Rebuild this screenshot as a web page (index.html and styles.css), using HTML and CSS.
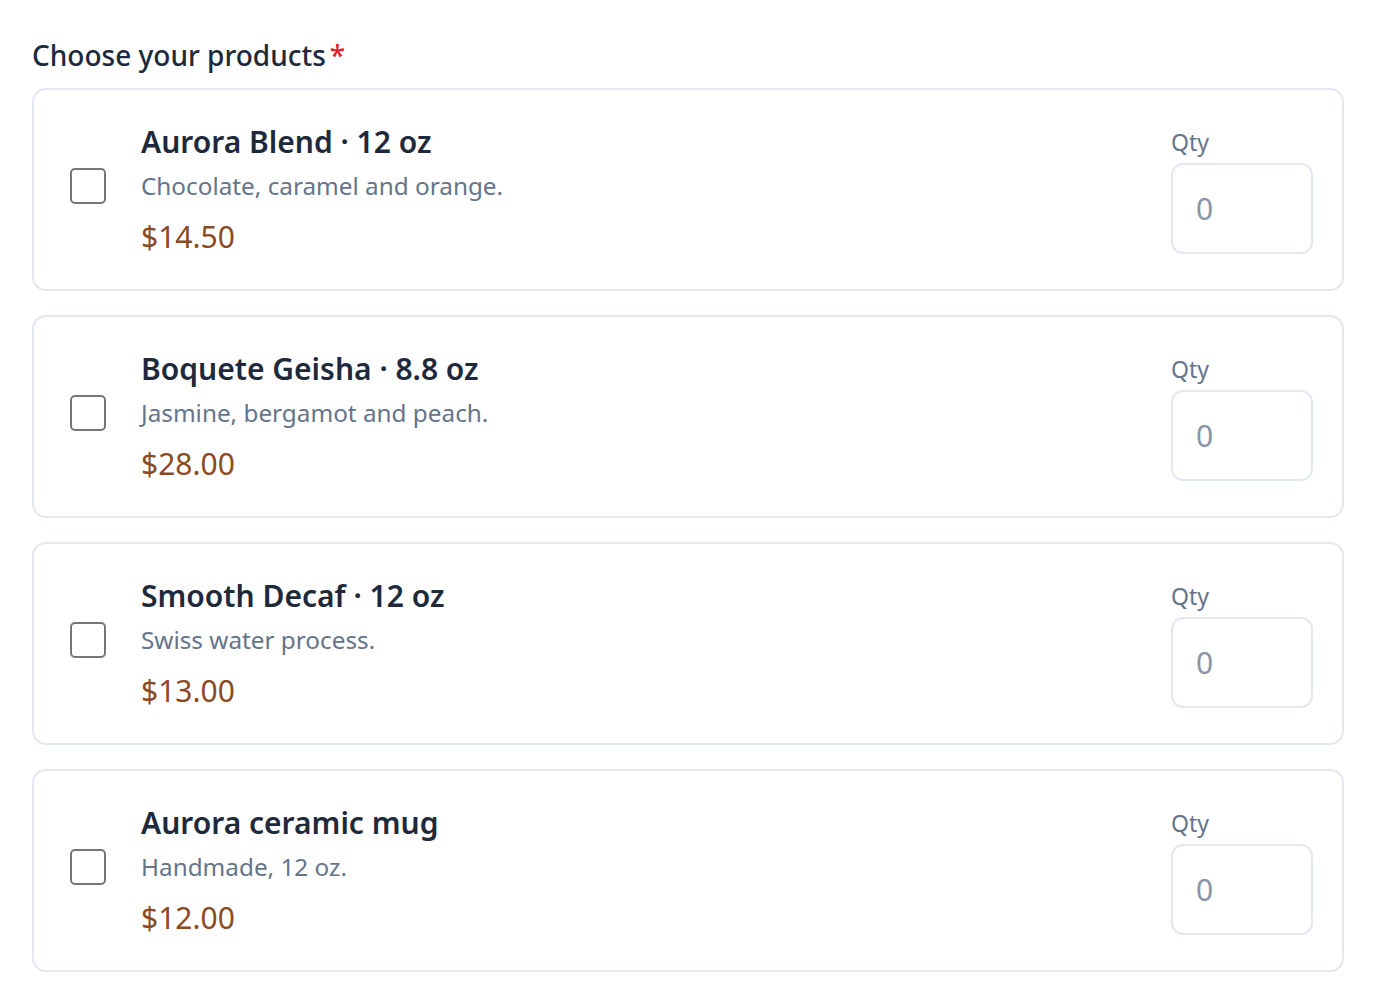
FILE: index.html
```html
<!DOCTYPE html>
<html lang="en">
<head>
    <meta charset="UTF-8">
    <meta name="viewport" content="width=device-width, initial-scale=1.0">
    <title>Choose your products</title>
    <link rel="stylesheet" href="styles.css">
</head>
<body>
    <div class="field">
        <div class="field-label">Choose your products<span class="required">*</span></div>

        <div class="product-list">
            <label class="product-card">
                <input type="checkbox" class="product-check">
                <div class="product-info">
                    <div class="product-name">Aurora Blend · 12 oz</div>
                    <div class="product-desc">Chocolate, caramel and orange.</div>
                    <div class="product-price">$14.50</div>
                </div>
                <div class="qty">
                    <span class="qty-label">Qty</span>
                    <input type="text" class="qty-input" placeholder="0">
                </div>
            </label>

            <label class="product-card">
                <input type="checkbox" class="product-check">
                <div class="product-info">
                    <div class="product-name">Boquete Geisha · 8.8 oz</div>
                    <div class="product-desc">Jasmine, bergamot and peach.</div>
                    <div class="product-price">$28.00</div>
                </div>
                <div class="qty">
                    <span class="qty-label">Qty</span>
                    <input type="text" class="qty-input" placeholder="0">
                </div>
            </label>

            <label class="product-card">
                <input type="checkbox" class="product-check">
                <div class="product-info">
                    <div class="product-name">Smooth Decaf · 12 oz</div>
                    <div class="product-desc">Swiss water process.</div>
                    <div class="product-price">$13.00</div>
                </div>
                <div class="qty">
                    <span class="qty-label">Qty</span>
                    <input type="text" class="qty-input" placeholder="0">
                </div>
            </label>

            <label class="product-card">
                <input type="checkbox" class="product-check">
                <div class="product-info">
                    <div class="product-name">Aurora ceramic mug</div>
                    <div class="product-desc">Handmade, 12 oz.</div>
                    <div class="product-price">$12.00</div>
                </div>
                <div class="qty">
                    <span class="qty-label">Qty</span>
                    <input type="text" class="qty-input" placeholder="0">
                </div>
            </label>
        </div>
    </div>
</body>
</html>
```

FILE: styles.css
```css
/* Basic reset */
* {
    margin: 0;
    padding: 0;
    box-sizing: border-box;
}

body {
    font-family: "Noto Sans", "Open Sans", sans-serif;
    background-color: #fff;
    color: #1e293b;
    padding: 36px 32px 0 32px;
}

/* Field label */
.field-label {
    font-size: 28px;
    line-height: 38px;
    font-weight: 500;
    color: #1e293b;
    margin-bottom: 14px;
}

.required {
    color: #dc2626;
    margin-left: 4px;
}

/* Product cards */
.product-list {
    display: flex;
    flex-direction: column;
    gap: 24px;
}

.product-card {
    display: flex;
    align-items: center;
    border: 2px solid #e2e8f0;
    border-radius: 14px;
    padding: 32px 29px 31px 36px;
    cursor: pointer;
}

.product-check {
    appearance: none;
    -webkit-appearance: none;
    width: 36px;
    height: 36px;
    border: 2px solid #767676;
    border-radius: 5px;
    background-color: #fff;
    margin-right: 35px;
    margin-bottom: 8px;
    flex-shrink: 0;
    cursor: pointer;
}

.product-info {
    flex: 1;
}

.product-name {
    font-size: 30px;
    line-height: 40px;
    font-weight: 600;
    color: #1e293b;
    margin-bottom: 6px;
}

.product-desc {
    font-size: 24.3px;
    line-height: 36px;
    color: #64748b;
}

.product-price {
    font-size: 30px;
    line-height: 42px;
    color: #8b4a1f;
    margin-top: 12px;
}

/* Quantity */
.qty {
    display: flex;
    flex-direction: column;
    gap: 5px;
    width: 142px;
}

.qty-label {
    font-size: 23px;
    line-height: 32px;
    color: #64748b;
}

.qty-input {
    width: 142px;
    height: 91px;
    border: 2px solid #e2e8f0;
    border-radius: 12px;
    padding: 0 23px;
    font-family: inherit;
    font-size: 30px;
    color: #1e293b;
    outline: none;
}

.qty-input::placeholder {
    color: #8a94a6;
}
```
